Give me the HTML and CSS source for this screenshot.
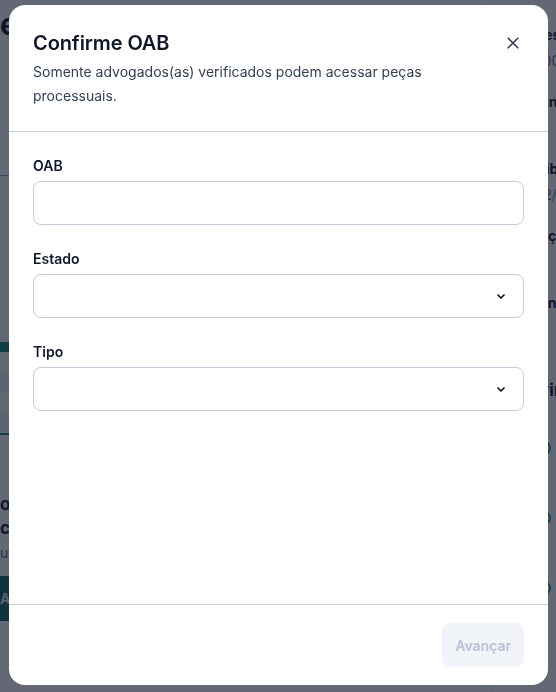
FILE: index.html
```html
<!DOCTYPE html>
<html lang="pt-BR">
<head>
<meta charset="utf-8">
<title>Confirme OAB</title>
<link rel="stylesheet" href="styles.css">
</head>
<body>
<div class="page" aria-hidden="true">
  <main class="main">
    <h1 class="page-title">eProcesso digital</h1>
    <hr class="page-rule">
    <div class="table">
      <div class="table-top"></div>
      <div class="table-head"></div>
      <div class="table-row"></div>
      <div class="table-row alt"></div>
      <div class="table-row"></div>
      <div class="table-row alt"></div>
      <div class="table-end"></div>
    </div>
    <div class="info">
      <p class="info-strong">odos os documentos</p>
      <p class="info-strong">com acesso restrito</p>
      <p class="info-muted">utilize sua OAB para acessar</p>
    </div>
    <div class="cta">Acessar peças</div>
  </main>
  <aside class="side">
    <dl class="facts">
      <div class="fact"><dt>Processo</dt><dd>Nº 0000000-00</dd></div>
      <div class="fact"><dt>Tribunal</dt><dd>TJSP</dd></div>
      <div class="fact"><dt>Distribuição</dt><dd>Em 12/03/2021</dd></div>
      <div class="fact"><dt>Situação</dt><dd>Ativo</dd></div>
      <div class="fact"><dt>Assunto</dt><dd>Cível</dd></div>
    </dl>
    <h2 class="side-title">Movimentações</h2>
    <ul class="moves">
      <li><span class="dot"></span>Decisão</li>
      <li><span class="dot"></span>Despacho</li>
      <li><span class="dot"></span>Petição</li>
    </ul>
  </aside>
</div>
<div class="overlay"></div>

<div class="modal" role="dialog" aria-labelledby="modal-title">
  <header class="modal-header">
    <div class="modal-heading">
      <h2 id="modal-title" class="modal-title">Confirme OAB</h2>
      <p class="modal-desc">Somente advogados(as) verificados podem acessar peças processuais.</p>
    </div>
    <button class="close-btn" type="button" aria-label="Fechar">
      <svg width="24" height="24" viewBox="0 0 24 24" fill="none" stroke="currentColor" stroke-width="1.6" stroke-linecap="round"><path d="M7.2 7.2L16.8 16.8M16.8 7.2L7.2 16.8"/></svg>
    </button>
  </header>
  <div class="modal-body">
    <div class="field">
      <label class="field-label">OAB</label>
      <div class="control"></div>
    </div>
    <div class="field">
      <label class="field-label">Estado</label>
      <div class="control select">
        <svg width="8" height="5" viewBox="0 0 8 5" fill="none" stroke="currentColor" stroke-width="1.7" stroke-linecap="round" stroke-linejoin="round"><path d="M1 1L4 4L7 1"/></svg>
      </div>
    </div>
    <div class="field">
      <label class="field-label">Tipo</label>
      <div class="control select">
        <svg width="8" height="5" viewBox="0 0 8 5" fill="none" stroke="currentColor" stroke-width="1.7" stroke-linecap="round" stroke-linejoin="round"><path d="M1 1L4 4L7 1"/></svg>
      </div>
    </div>
  </div>
  <footer class="modal-footer">
    <button class="next-btn" type="button" disabled>Avançar</button>
  </footer>
</div>
</body>
</html>
```

FILE: styles.css
```css
* { box-sizing: border-box; }

html, body {
  margin: 0;
  height: 100%;
  overflow: hidden;
  background: #ffffff;
  font-family: Inter, "Noto Sans", "Liberation Sans", sans-serif;
  color: #0f172a;
}

/* ---------- underlying page ---------- */
.page {
  display: flex;
  height: 100vh;
}

.main {
  width: 493px;
  flex: none;
  border-right: 1px solid #e2e8f0;
  display: flex;
  flex-direction: column;
  overflow: hidden;
  white-space: nowrap;
}

.page-title {
  margin: 6px 0 0 0;
  font-size: 30px;
  line-height: 36px;
  font-weight: 700;
  color: #0f172a;
}

.page-rule {
  margin: 133px 0 0 0;
  border: 0;
  border-top: 1px solid #94a3b8;
  height: 0;
}

.table {
  margin-top: 121px;
  display: flex;
  flex-direction: column;
}
.table-top { height: 45px; background: #f8fafc; }
.table-head { height: 10px; background: #0f8a74; }
.table-row { height: 20px; background: #ffffff; }
.table-row.alt { background: #eef2f6; }
.table-end { height: 2px; background: #0f8a74; margin-top: 1px; }

.info {
  margin-top: 57px;
}
.info p { margin: 0; }
.info-strong {
  font-size: 17px;
  line-height: 24px;
  font-weight: 700;
  color: #0f172a;
}
.info-muted {
  margin-top: 2px !important;
  font-size: 14px;
  line-height: 22px;
  color: #64748b;
}

.cta {
  margin-top: 12px;
  height: 45px;
  width: 180px;
  background: #0b6b5e;
  color: #e2e8f0;
  font-weight: 700;
  font-size: 14px;
  line-height: 45px;
}

.side {
  flex: 1;
  padding: 25px 0 0 20px;
  overflow: hidden;
  white-space: nowrap;
}

.facts { margin: 0; display: flex; flex-direction: column; gap: 21px; }
.fact { display: flex; flex-direction: column; gap: 6px; }
.fact dt { font-size: 14px; line-height: 20px; font-weight: 700; color: #0f172a; }
.fact dd { margin: 0; font-size: 14px; line-height: 20px; color: #64748b; }

.side-title {
  margin: 39px 0 0 0;
  font-size: 17px;
  line-height: 24px;
  font-weight: 700;
}

.moves {
  list-style: none;
  margin: 38px 0 0 0;
  padding: 0;
  display: flex;
  flex-direction: column;
  gap: 54px;
}
.moves li {
  display: flex;
  align-items: center;
  gap: 8px;
  font-size: 14px;
  line-height: 16px;
}
.dot {
  width: 14px;
  height: 14px;
  border-radius: 50%;
  border: 2px solid #10a37f;
  flex: none;
  margin-left: 24px;
}

.overlay {
  position: fixed;
  inset: 0;
  background: rgba(15, 23, 42, 0.65);
}

/* ---------- modal ---------- */
.modal {
  position: fixed;
  left: 9px;
  top: 5px;
  width: 539px;
  height: 680px;
  background: #ffffff;
  border-radius: 16px;
  display: flex;
  flex-direction: column;
  overflow: hidden;
}

.modal-header {
  display: flex;
  justify-content: space-between;
  align-items: flex-start;
  padding: 24px 24px 23px;
  border-bottom: 1px solid #cbd5e1;
}

.modal-heading {
  max-width: 400px;
}

.modal-title {
  margin: 0;
  font-size: 20px;
  line-height: 28px;
  font-weight: 600;
  color: #0f172a;
  letter-spacing: -0.1px;
}

.modal-desc {
  margin: 3px 0 0 0;
  font-size: 14px;
  line-height: 24px;
  color: #334155;
}

.close-btn {
  width: 24px;
  height: 24px;
  margin: 2px -1px 0 0;
  padding: 0;
  border: 0;
  background: transparent;
  color: #334155;
  display: flex;
  align-items: center;
  justify-content: center;
}

.modal-body {
  flex: 1;
  padding: 24px;
  display: flex;
  flex-direction: column;
  gap: 24px;
}

.field {
  display: flex;
  flex-direction: column;
  gap: 5px;
}

.field-label {
  font-size: 14px;
  line-height: 20px;
  font-weight: 600;
  color: #0f172a;
}

.control {
  height: 44px;
  border: 1px solid #c3cddb;
  border-radius: 8px;
  background: #ffffff;
}

.control.select {
  display: flex;
  align-items: center;
  justify-content: flex-end;
  padding-right: 18px;
  color: #0f172a;
}

.modal-footer {
  border-top: 1px solid #cbd5e1;
  padding: 18px 24px;
  display: flex;
  justify-content: flex-end;
}

.next-btn {
  height: 44px;
  padding: 0 13px;
  border: 0;
  border-radius: 8px;
  background: #f1f5f9;
  color: #b9c4d4;
  font-family: inherit;
  font-size: 14px;
  font-weight: 600;
}
```
